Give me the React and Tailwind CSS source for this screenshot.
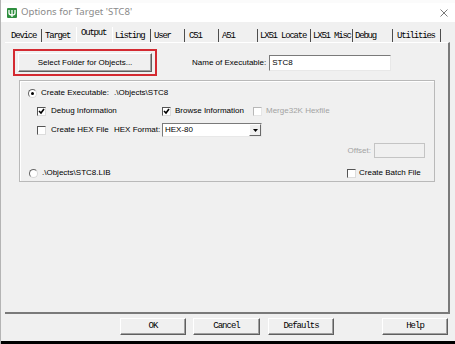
import React from "react";

const ui = { fontFamily: '"Liberation Sans", Arial, sans-serif' };
const mono = { fontFamily: '"Liberation Mono", "Courier New", monospace' };

const tabs = [
  { label: "Device", w: "w-[37px]", pl: "pl-[6px]", sep: true },
  { label: "Target", w: "w-[34px]", pl: "pl-[3px]", sep: false },
  { label: "Output", w: "w-[37px]", pl: "pl-[4px]", sep: true, active: true },
  { label: "Listing", w: "w-[38px]", pl: "pl-[2px]", sep: true },
  { label: "User", w: "w-[34px]", pl: "pl-[3px]", sep: true },
  { label: "C51", w: "w-[34px]", pl: "pl-[4px]", sep: true },
  { label: "A51", w: "w-[39px]", pl: "pl-[3px]", sep: true },
  { label: "LX51 Locate", w: "w-[53px]", pl: "pl-[2px]", sep: true },
  { label: "LX51 Misc", w: "w-[42px]", pl: "pl-[2px]", sep: true },
  { label: "Debug", w: "w-[40px]", pl: "pl-[2px]", sep: true },
  { label: "Utilities", w: "w-[48px]", pl: "pl-[4px]", sep: true },
];

function Check({ checked, disabled }) {
  return (
    <span
      className={
        disabled
          ? "w-[9px] h-[9px] shrink-0 bg-white border border-t-[#b8b8b8] border-l-[#b8b8b8] border-b-[#e6e6e6] border-r-[#e6e6e6] flex items-center justify-center"
          : "w-[9px] h-[9px] shrink-0 bg-white border border-t-[#555] border-l-[#555] border-b-[#dcdcdc] border-r-[#dcdcdc] flex items-center justify-center"
      }
    >
      {checked && (
        <svg width="7" height="7" viewBox="0 0 7 7">
          <path d="M1 3 L3 5 L6 1" fill="none" stroke="#000" strokeWidth="1.6" />
        </svg>
      )}
    </span>
  );
}

function Radio({ checked }) {
  return (
    <span className="w-[9px] h-[9px] shrink-0 rounded-full bg-white border border-t-[#666] border-l-[#666] border-b-[#d8d8d8] border-r-[#d8d8d8] flex items-center justify-center">
      {checked && <span className="w-[3px] h-[3px] rounded-full bg-black" />}
    </span>
  );
}

function DlgButton({ w, children }) {
  return (
    <div
      className={`${w} h-[17px] bg-[#f0f0f0] border border-t-white border-l-white border-b-[#5f5f5f] border-r-[#5f5f5f] shadow-[inset_-1px_-1px_0_#a0a0a0] flex items-center justify-center text-[9px] tracking-[-1px] text-black`}
      style={mono}
    >
      {children}
    </div>
  );
}

export default function App() {
  return (
    <div className="w-[455px] h-[344px] bg-[#f0f0f0] flex flex-col overflow-hidden border-l border-[#b4b4b4] text-[8px] text-black" style={ui}>
      <div className="h-[3px] bg-[#fbfbfb]" />

      {/* title bar */}
      <div className="h-[19px] bg-white flex items-center pl-[6px] pr-[7px]">
        <svg width="10" height="10" viewBox="0 0 10 10">
          <rect width="10" height="10" rx="1" fill="#2f8f3f" />
          <path d="M2 2 L2 5 Q2 7 5 7 Q8 7 8 5 L8 2 M5 2 L5 9" fill="none" stroke="#fff" strokeWidth="1.3" />
        </svg>
        <span className="ml-[4px] text-[9.6px] text-[#8a8a8a]" style={{ fontFamily: '"Noto Sans", "Open Sans", sans-serif' }}>
          Options for Target 'STC8'
        </span>
        <svg className="ml-auto" width="8" height="8" viewBox="0 0 8 8">
          <path d="M0.5 0.5 L7.5 7.5 M7.5 0.5 L0.5 7.5" stroke="#7a7a7a" strokeWidth="1" />
        </svg>
      </div>

      {/* tabs */}
      <div className="h-[20px] flex items-end pl-[4px]">
        {tabs.map((t) => (
          <div
            key={t.label}
            className={
              (t.active
                ? "h-[15px] pt-[2px] border-l border-white "
                : "h-[13px] pt-[3px] ") +
              (t.sep ? "border-r border-[#4d4d4d] " : "") +
              `${t.w} ${t.pl} flex items-start text-[9px] tracking-[-1.2px] leading-[9px] whitespace-nowrap text-black`
            }
            style={mono}
          >
            {t.label}
          </div>
        ))}
      </div>

      {/* tab panel */}
      <div className="h-[272px] w-[445px] ml-[4px] border-t border-white border-r-2 border-b-2 border-r-[#7a7a7a] border-b-[#7a7a7a] flex flex-col pt-[6px]">
        <div className="flex items-center">
          <div className="ml-[8px] w-[144px] h-[27px] border-2 border-[#d42a31] flex items-center justify-center">
            <div className="w-[134px] h-[19px] bg-[#f0f0f0] border border-t-white border-l-white border-b-[#5f5f5f] border-r-[#5f5f5f] shadow-[inset_-1px_-1px_0_#a0a0a0] flex items-center justify-center">
              Select Folder for Objects...
            </div>
          </div>
          <span className="ml-[35px]">Name of Executable:</span>
          <div className="ml-[3px] w-[122px] h-[16px] bg-white border border-t-[#7a7a7a] border-l-[#7a7a7a] border-b-[#e8e8e8] border-r-[#e8e8e8] flex items-center pl-[2px]">
            STC8
          </div>
        </div>

        {/* group box */}
        <div className="mt-[4px] ml-[14px] w-[416px] h-[102px] border border-[#b9b9b9] shadow-[inset_1px_1px_0_#fff] flex flex-col pt-[5px]">
          <div className="h-[14px] flex items-center">
            <span className="ml-[8px]"><Radio checked /></span>
            <span className="ml-[4px]">Create Executable:</span>
            <span className="ml-[5px]">.\Objects\STC8</span>
          </div>

          <div className="mt-[4px] h-[14px] flex items-center">
            <div className="ml-[17px] w-[125px] flex items-center">
              <Check checked />
              <span className="ml-[5px]">Debug Information</span>
            </div>
            <div className="w-[91px] flex items-center">
              <Check checked />
              <span className="ml-[4px]">Browse Information</span>
            </div>
            <div className="flex items-center">
              <Check disabled />
              <span className="ml-[4px] text-[#a3a3a3]">Merge32K Hexfile</span>
            </div>
          </div>

          <div className="mt-[5px] h-[14px] flex items-center">
            <div className="ml-[17px] w-[77px] flex items-center">
              <Check />
              <span className="ml-[5px]">Create HEX File</span>
            </div>
            <span className="w-[48px]">HEX Format:</span>
            <div className="w-[100px] h-[14px] bg-white border border-t-[#7a7a7a] border-l-[#7a7a7a] border-b-[#e8e8e8] border-r-[#e8e8e8] flex items-center">
              <span className="pl-[2px] flex-1">HEX-80</span>
              <div className="w-[12px] h-[12px] bg-[#f0f0f0] border border-t-white border-l-white border-b-[#6a6a6a] border-r-[#6a6a6a] flex items-center justify-center">
                <svg width="5" height="3" viewBox="0 0 5 3">
                  <path d="M0 0 L5 0 L2.5 3 Z" fill="#000" />
                </svg>
              </div>
            </div>
          </div>

          <div className="mt-[6px] h-[15px] flex items-center justify-end pr-[9px]">
            <span className="text-[#a3a3a3]">Offset:</span>
            <div className="ml-[3px] w-[51px] h-[15px] bg-[#f0f0f0] border border-[#c4c4c4]" />
          </div>

          <div className="mt-[8px] h-[14px] flex items-center">
            <span className="ml-[9px]"><Radio /></span>
            <span className="ml-[4px]">.\Objects\STC8.LIB</span>
            <div className="ml-auto w-[87px] flex items-center">
              <Check />
              <span className="ml-[3px]">Create Batch File</span>
            </div>
          </div>
        </div>
      </div>

      {/* dialog buttons */}
      <div className="h-[27px] pt-[4px] flex items-start">
        <div className="ml-[119px]"><DlgButton w="w-[66px]">OK</DlgButton></div>
        <div className="ml-[7px]"><DlgButton w="w-[67px]">Cancel</DlgButton></div>
        <div className="ml-[8px]"><DlgButton w="w-[66px]">Defaults</DlgButton></div>
        <div className="ml-[48px]"><DlgButton w="w-[66px]">Help</DlgButton></div>
      </div>

      <div className="h-[3px] bg-black" />
    </div>
  );
}
